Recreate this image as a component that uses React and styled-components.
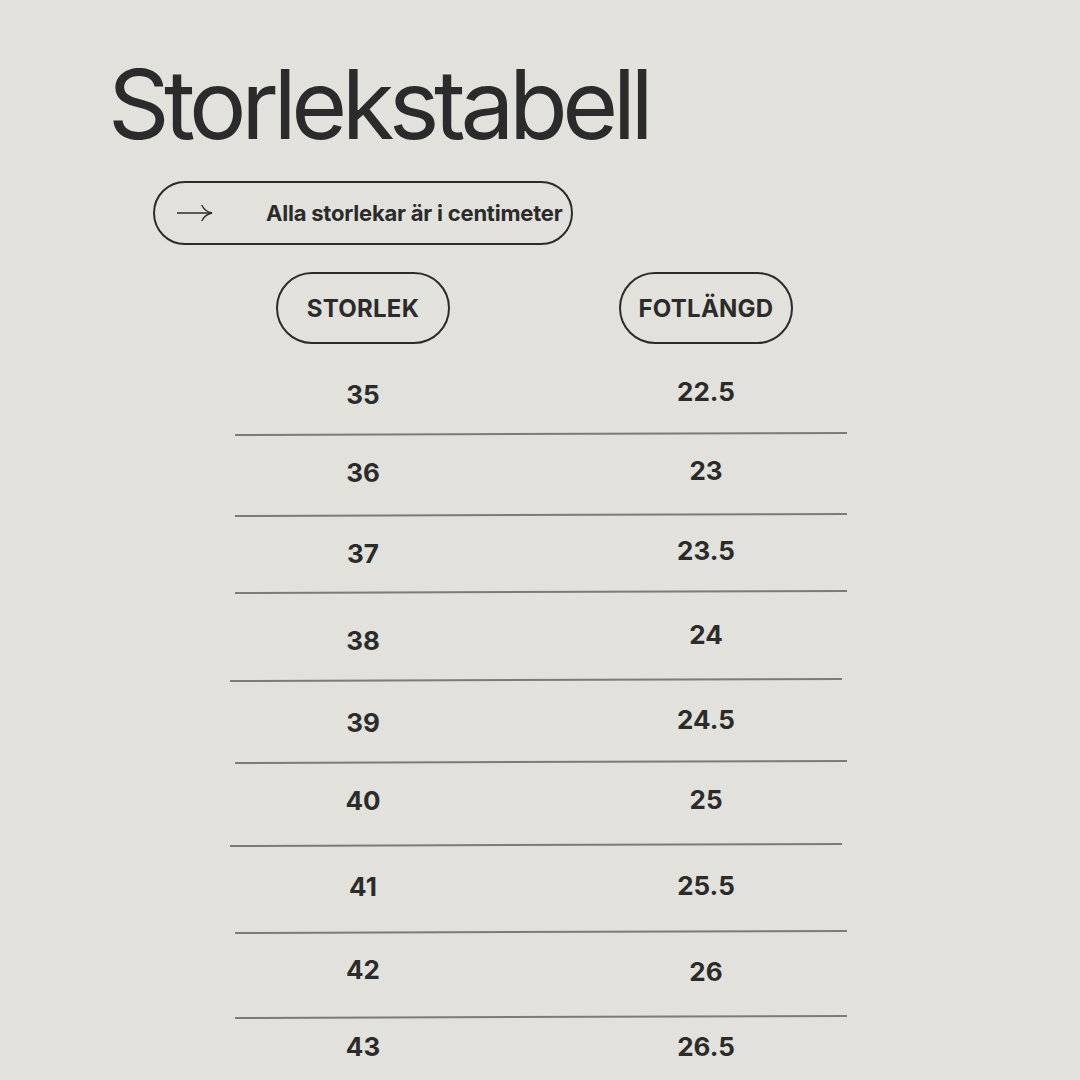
import React from "react";
import styled, { createGlobalStyle } from "styled-components";

const GlobalStyle = createGlobalStyle`
  html, body {
    margin: 0;
    padding: 0;
    background: #e2e1dc;
  }
  body {
    font-family: Inter, "Liberation Sans", sans-serif;
    color: #2b2b2b;
  }
`;

const Page = styled.main`
  width: 1080px;
  height: 1080px;
  overflow: hidden;
  box-sizing: border-box;
  padding: 56px 0 0 108px;
  display: flex;
  flex-direction: column;
  align-items: flex-start;
`;

const Title = styled.h1`
  margin: 0;
  font-family: Inter, "Liberation Sans", sans-serif;
  font-weight: 400;
  font-size: 96px;
  line-height: 96px;
  letter-spacing: -0.057em;
  color: #2b2b2b;
`;

const NotePill = styled.div`
  margin: 29px 0 0 45px;
  width: 420px;
  height: 64px;
  box-sizing: border-box;
  border: 2px solid #2b2b2b;
  border-radius: 32px;
  display: flex;
  align-items: center;
  padding-left: 22px;
  gap: 53px;
`;

const NoteText = styled.span`
  font-size: 22px;
  font-weight: 700;
  white-space: nowrap;
  letter-spacing: -0.01em;
`;

const Table = styled.section`
  margin: 27px 0 0 127px;
  width: 612px;
  display: flex;
  flex-direction: column;
`;

const Columns = styled.div`
  display: grid;
  grid-template-columns: 256px 256px;
  column-gap: 87px;
  justify-items: center;
`;

const HeadPill = styled.div`
  width: 174px;
  height: 72px;
  box-sizing: border-box;
  border: 2px solid #2b2b2b;
  border-radius: 36px;
  display: flex;
  align-items: center;
  justify-content: center;
  font-size: 24px;
  font-weight: 700;
  letter-spacing: 0.01em;
`;

const Row = styled(Columns)`
  padding-top: ${(p) => p.$top}px;
  padding-bottom: ${(p) => p.$below}px;
`;

const Cell = styled.div`
  height: 30px;
  line-height: 30px;
  font-size: 26px;
  font-weight: 700;
  margin-top: ${(p) => -(p.$lift || 0)}px;
  margin-bottom: ${(p) => p.$lift || 0}px;
`;

const Divider = styled.div`
  width: 612px;
  height: 2px;
  background: #7b7b77;
  margin-left: ${(p) => (p.$shift ? -5 : 0)}px;
  transform: rotate(-0.19deg);
`;

const Arrow = () => (
  <svg width="36" height="18" viewBox="0 0 36 18" fill="none">
    <path d="M0 9 H35" stroke="#2b2b2b" strokeWidth="1.4" />
    <path
      d="M25 1.5 Q28 7.5 35 9 Q28 10.5 25 16.5"
      stroke="#2b2b2b"
      strokeWidth="1.4"
      strokeLinecap="round"
    />
  </svg>
);

const rows = [
  { size: "35", foot: "22.5", top: 36, below: 23, lift: 3 },
  { size: "36", foot: "23", top: 23, below: 26, lift: 2 },
  { size: "37", foot: "23.5", top: 23, below: 22, lift: 3 },
  { size: "38", foot: "24", top: 33, below: 23, lift: 6, shift: true },
  { size: "39", foot: "24.5", top: 27, below: 23, lift: 3 },
  { size: "40", foot: "25", top: 23, below: 28, lift: 1, shift: true },
  { size: "41", foot: "25.5", top: 26, below: 29, lift: 1 },
  { size: "42", foot: "26", top: 22, below: 31, lift: -2 },
  { size: "43", foot: "26.5", top: 14, below: 0, lift: 0 },
];

export default function App() {
  return (
    <>
      <GlobalStyle />
      <Page>
        <Title>Storlekstabell</Title>
        <NotePill>
          <Arrow />
          <NoteText>Alla storlekar är i centimeter</NoteText>
        </NotePill>
        <Table>
          <Columns>
            <HeadPill>STORLEK</HeadPill>
            <HeadPill>FOTLÄNGD</HeadPill>
          </Columns>
          {rows.map((r, i) => (
            <React.Fragment key={r.size}>
              <Row $top={r.top} $below={r.below}>
                <Cell>{r.size}</Cell>
                <Cell $lift={r.lift}>{r.foot}</Cell>
              </Row>
              {i < rows.length - 1 && <Divider $shift={r.shift} />}
            </React.Fragment>
          ))}
        </Table>
      </Page>
    </>
  );
}
